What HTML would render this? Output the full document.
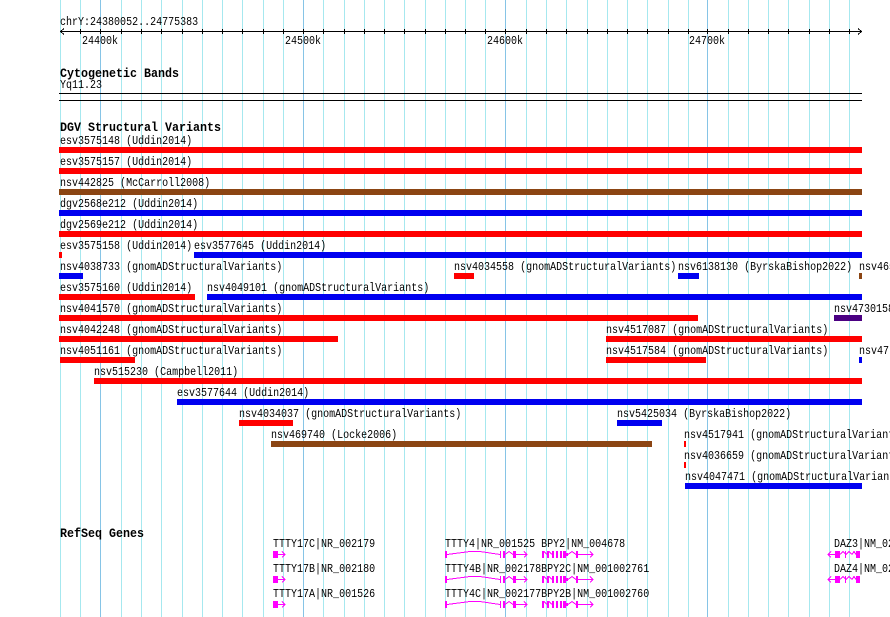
<!DOCTYPE html>
<html><head><meta charset="utf-8"><style>
html,body{margin:0;padding:0;background:#fff;width:890px;height:617px;overflow:hidden;position:relative}
.t{position:absolute;font-family:"Liberation Mono","DejaVu Sans Mono",monospace;font-size:12px;line-height:12px;color:#000;white-space:nowrap;transform:scaleX(0.834);transform-origin:0 0}
.h{font-weight:bold;font-size:13px;line-height:13px;transform:scaleX(0.897)}
.v{margin-top:-1px}
.b{position:absolute;height:6px}
.r{background:#ff0000}.u{background:#0000f0}.n{background:#8b4513}.p{background:#4b0082}
svg{position:absolute;left:0;top:0}
</style></head><body>
<svg width="890" height="617" shape-rendering="crispEdges">
<g stroke="#a6e8ef" stroke-width="1">
<line x1="60.5" y1="0" x2="60.5" y2="617"/><line x1="80.5" y1="0" x2="80.5" y2="617"/><line x1="121.5" y1="0" x2="121.5" y2="617"/><line x1="141.5" y1="0" x2="141.5" y2="617"/><line x1="161.5" y1="0" x2="161.5" y2="617"/><line x1="182.5" y1="0" x2="182.5" y2="617"/><line x1="202.5" y1="0" x2="202.5" y2="617"/><line x1="222.5" y1="0" x2="222.5" y2="617"/><line x1="242.5" y1="0" x2="242.5" y2="617"/><line x1="263.5" y1="0" x2="263.5" y2="617"/><line x1="283.5" y1="0" x2="283.5" y2="617"/><line x1="323.5" y1="0" x2="323.5" y2="617"/><line x1="344.5" y1="0" x2="344.5" y2="617"/><line x1="364.5" y1="0" x2="364.5" y2="617"/><line x1="384.5" y1="0" x2="384.5" y2="617"/><line x1="404.5" y1="0" x2="404.5" y2="617"/><line x1="425.5" y1="0" x2="425.5" y2="617"/><line x1="445.5" y1="0" x2="445.5" y2="617"/><line x1="465.5" y1="0" x2="465.5" y2="617"/><line x1="485.5" y1="0" x2="485.5" y2="617"/><line x1="526.5" y1="0" x2="526.5" y2="617"/><line x1="546.5" y1="0" x2="546.5" y2="617"/><line x1="566.5" y1="0" x2="566.5" y2="617"/><line x1="587.5" y1="0" x2="587.5" y2="617"/><line x1="607.5" y1="0" x2="607.5" y2="617"/><line x1="627.5" y1="0" x2="627.5" y2="617"/><line x1="647.5" y1="0" x2="647.5" y2="617"/><line x1="668.5" y1="0" x2="668.5" y2="617"/><line x1="688.5" y1="0" x2="688.5" y2="617"/><line x1="728.5" y1="0" x2="728.5" y2="617"/><line x1="748.5" y1="0" x2="748.5" y2="617"/><line x1="768.5" y1="0" x2="768.5" y2="617"/><line x1="788.5" y1="0" x2="788.5" y2="617"/><line x1="809.5" y1="0" x2="809.5" y2="617"/><line x1="829.5" y1="0" x2="829.5" y2="617"/><line x1="849.5" y1="0" x2="849.5" y2="617"/>
</g>
<g stroke="#86c4e6" stroke-width="1">
<line x1="100.5" y1="0" x2="100.5" y2="617"/><line x1="303.5" y1="0" x2="303.5" y2="617"/><line x1="505.5" y1="0" x2="505.5" y2="617"/><line x1="707.5" y1="0" x2="707.5" y2="617"/>
</g>
<g stroke="#000" stroke-width="1">
<line x1="60" y1="31.5" x2="862" y2="31.5"/>
<polyline fill="none" points="64,28.5 60.5,31.5 64,34.5"/>
<polyline fill="none" points="858,28.5 861.5,31.5 858,34.5"/>
<line x1="80.5" y1="29" x2="80.5" y2="34"/><line x1="100.5" y1="29" x2="100.5" y2="34"/><line x1="121.5" y1="29" x2="121.5" y2="34"/><line x1="141.5" y1="29" x2="141.5" y2="34"/><line x1="161.5" y1="29" x2="161.5" y2="34"/><line x1="182.5" y1="29" x2="182.5" y2="34"/><line x1="202.5" y1="29" x2="202.5" y2="34"/><line x1="222.5" y1="29" x2="222.5" y2="34"/><line x1="242.5" y1="29" x2="242.5" y2="34"/><line x1="263.5" y1="29" x2="263.5" y2="34"/><line x1="283.5" y1="29" x2="283.5" y2="34"/><line x1="303.5" y1="29" x2="303.5" y2="34"/><line x1="323.5" y1="29" x2="323.5" y2="34"/><line x1="344.5" y1="29" x2="344.5" y2="34"/><line x1="364.5" y1="29" x2="364.5" y2="34"/><line x1="384.5" y1="29" x2="384.5" y2="34"/><line x1="404.5" y1="29" x2="404.5" y2="34"/><line x1="425.5" y1="29" x2="425.5" y2="34"/><line x1="445.5" y1="29" x2="445.5" y2="34"/><line x1="465.5" y1="29" x2="465.5" y2="34"/><line x1="485.5" y1="29" x2="485.5" y2="34"/><line x1="505.5" y1="29" x2="505.5" y2="34"/><line x1="526.5" y1="29" x2="526.5" y2="34"/><line x1="546.5" y1="29" x2="546.5" y2="34"/><line x1="566.5" y1="29" x2="566.5" y2="34"/><line x1="587.5" y1="29" x2="587.5" y2="34"/><line x1="607.5" y1="29" x2="607.5" y2="34"/><line x1="627.5" y1="29" x2="627.5" y2="34"/><line x1="647.5" y1="29" x2="647.5" y2="34"/><line x1="668.5" y1="29" x2="668.5" y2="34"/><line x1="688.5" y1="29" x2="688.5" y2="34"/><line x1="707.5" y1="29" x2="707.5" y2="34"/><line x1="728.5" y1="29" x2="728.5" y2="34"/><line x1="748.5" y1="29" x2="748.5" y2="34"/><line x1="768.5" y1="29" x2="768.5" y2="34"/><line x1="788.5" y1="29" x2="788.5" y2="34"/><line x1="809.5" y1="29" x2="809.5" y2="34"/><line x1="829.5" y1="29" x2="829.5" y2="34"/><line x1="849.5" y1="29" x2="849.5" y2="34"/>
<line x1="59" y1="93.5" x2="862" y2="93.5"/>
<line x1="59" y1="100.5" x2="862" y2="100.5"/>
</g>
<g fill="#ff00ff" stroke="#ff00ff" stroke-width="1">
<g id="g17"><rect x="273" y="551" width="5" height="7" stroke="none"/><line x1="278" y1="554.5" x2="285" y2="554.5"/><polyline fill="none" points="282,551.5 285,554.5 282,557.5"/></g>
<use href="#g17" transform="translate(0,25)"/>
<use href="#g17" transform="translate(0,50)"/>
<g id="t4">
<rect x="445" y="551" width="2" height="7" stroke="none"/>
<path fill="none" d="M447 554.5 L470 551.5 L480 551.5 L500 554.5"/>
<rect x="500" y="551" width="1" height="7" stroke="none"/><rect x="503" y="551" width="2" height="7" stroke="none"/>
<polyline fill="none" points="505,554.5 509,551.5 513,554.5"/>
<rect x="513" y="551" width="3" height="7" stroke="none"/>
<line x1="516" y1="554.5" x2="527" y2="554.5"/><polyline fill="none" points="524,551.5 527,554.5 524,557.5"/>
<rect x="542" y="551" width="2" height="7" stroke="none"/>
<polyline fill="none" points="544,551.5 547,554.5"/>
<rect x="547" y="551" width="2" height="7" stroke="none"/>
<polyline fill="none" points="549,551.5 552,554.5"/>
<rect x="552" y="551" width="2" height="7" stroke="none"/>
<rect x="556" y="551" width="2" height="7" stroke="none"/>
<rect x="560" y="551" width="2" height="7" stroke="none"/><rect x="563" y="551" width="3" height="7" stroke="none"/>
<rect x="566" y="553" width="2" height="3" stroke="none"/>
<polyline fill="none" points="568,554.5 572,551.5 576,554.5"/>
<rect x="576" y="551" width="2" height="7" stroke="none"/>
<line x1="578" y1="554.5" x2="593" y2="554.5"/><polyline fill="none" points="590,551.5 593,554.5 590,557.5"/>
</g>
<use href="#t4" transform="translate(0,25)"/>
<use href="#t4" transform="translate(0,50)"/>
<g id="dz">
<line x1="828" y1="554.5" x2="835" y2="554.5"/><polyline fill="none" points="831,551.5 828,554.5 831,557.5"/>
<rect x="835" y="551" width="5" height="7" stroke="none"/>
<polyline fill="none" points="840,554.5 843,551.5 846,554.5 849,551.5 852,554.5"/>
<rect x="845" y="551" width="1" height="7" stroke="none"/>
<rect x="856" y="551" width="4" height="7" stroke="none"/>
<polyline fill="none" points="852,554.5 854,551.5 856,554.5"/>
</g>
<use href="#dz" transform="translate(0,25)"/>
</g>
</svg>

<div class="t" style="left:60px;top:16px">chrY:24380052..24775383</div>
<div class="t" style="left:82px;top:35px">24400k</div>
<div class="t" style="left:285px;top:35px">24500k</div>
<div class="t" style="left:487px;top:35px">24600k</div>
<div class="t" style="left:689px;top:35px">24700k</div>

<div class="t h" style="left:60px;top:67px">Cytogenetic Bands</div>
<div class="t" style="left:60px;top:79px">Yq11.23</div>

<div class="t h" style="left:60px;top:121px">DGV Structural Variants</div>

<div class="t v" style="left:60px;top:136px">esv3575148 (Uddin2014)</div>
<div class="b r" style="left:59px;top:147px;width:803px"></div>
<div class="t v" style="left:60px;top:157px">esv3575157 (Uddin2014)</div>
<div class="b r" style="left:59px;top:168px;width:803px"></div>
<div class="t v" style="left:60px;top:178px">nsv442825 (McCarroll2008)</div>
<div class="b n" style="left:59px;top:189px;width:803px"></div>
<div class="t v" style="left:60px;top:199px">dgv2568e212 (Uddin2014)</div>
<div class="b u" style="left:59px;top:210px;width:803px"></div>
<div class="t v" style="left:60px;top:220px">dgv2569e212 (Uddin2014)</div>
<div class="b r" style="left:59px;top:231px;width:803px"></div>

<div class="t v" style="left:60px;top:241px">esv3575158 (Uddin2014)</div>
<div class="b r" style="left:59px;top:252px;width:3px"></div>
<div class="t v" style="left:194px;top:241px">esv3577645 (Uddin2014)</div>
<div class="b u" style="left:194px;top:252px;width:668px"></div>

<div class="t v" style="left:60px;top:262px">nsv4038733 (gnomADStructuralVariants)</div>
<div class="b u" style="left:59px;top:273px;width:24px"></div>
<div class="t v" style="left:454px;top:262px">nsv4034558 (gnomADStructuralVariants)</div>
<div class="b r" style="left:454px;top:273px;width:20px"></div>
<div class="t v" style="left:678px;top:262px">nsv6138130 (ByrskaBishop2022)</div>
<div class="b u" style="left:678px;top:273px;width:21px"></div>
<div class="t v" style="left:859px;top:262px">nsv465</div>
<div class="b n" style="left:859px;top:273px;width:3px"></div>

<div class="t v" style="left:60px;top:283px">esv3575160 (Uddin2014)</div>
<div class="b r" style="left:59px;top:294px;width:136px"></div>
<div class="t v" style="left:207px;top:283px">nsv4049101 (gnomADStructuralVariants)</div>
<div class="b u" style="left:207px;top:294px;width:655px"></div>

<div class="t v" style="left:60px;top:304px">nsv4041570 (gnomADStructuralVariants)</div>
<div class="b r" style="left:59px;top:315px;width:639px"></div>
<div class="t v" style="left:834px;top:304px">nsv4730158</div>
<div class="b p" style="left:834px;top:315px;width:28px"></div>

<div class="t v" style="left:60px;top:325px">nsv4042248 (gnomADStructuralVariants)</div>
<div class="b r" style="left:59px;top:336px;width:279px"></div>
<div class="t v" style="left:606px;top:325px">nsv4517087 (gnomADStructuralVariants)</div>
<div class="b r" style="left:606px;top:336px;width:256px"></div>

<div class="t v" style="left:60px;top:346px">nsv4051161 (gnomADStructuralVariants)</div>
<div class="b r" style="left:60px;top:357px;width:75px"></div>
<div class="t v" style="left:606px;top:346px">nsv4517584 (gnomADStructuralVariants)</div>
<div class="b r" style="left:606px;top:357px;width:100px"></div>
<div class="t v" style="left:859px;top:346px">nsv47</div>
<div class="b u" style="left:859px;top:357px;width:3px"></div>

<div class="t v" style="left:94px;top:367px">nsv515230 (Campbell2011)</div>
<div class="b r" style="left:94px;top:378px;width:768px"></div>

<div class="t v" style="left:177px;top:388px">esv3577644 (Uddin2014)</div>
<div class="b u" style="left:177px;top:399px;width:685px"></div>

<div class="t v" style="left:239px;top:409px">nsv4034037 (gnomADStructuralVariants)</div>
<div class="b r" style="left:239px;top:420px;width:54px"></div>
<div class="t v" style="left:617px;top:409px">nsv5425034 (ByrskaBishop2022)</div>
<div class="b u" style="left:617px;top:420px;width:45px"></div>

<div class="t v" style="left:271px;top:430px">nsv469740 (Locke2006)</div>
<div class="b n" style="left:271px;top:441px;width:381px"></div>
<div class="t v" style="left:684px;top:430px">nsv4517941 (gnomADStructuralVariants)</div>
<div class="b r" style="left:684px;top:441px;width:2px"></div>

<div class="t v" style="left:684px;top:451px">nsv4036659 (gnomADStructuralVariants)</div>
<div class="b r" style="left:684px;top:462px;width:2px"></div>

<div class="t v" style="left:685px;top:472px">nsv4047471 (gnomADStructuralVariants)</div>
<div class="b u" style="left:685px;top:483px;width:177px"></div>

<div class="t h" style="left:60px;top:527px">RefSeq Genes</div>
<div class="t" style="left:273px;top:538px">TTTY17C|NR_002179</div>
<div class="t" style="left:273px;top:563px">TTTY17B|NR_002180</div>
<div class="t" style="left:273px;top:588px">TTTY17A|NR_001526</div>
<div class="t" style="left:445px;top:538px">TTTY4|NR_001525 BPY2|NM_004678</div>
<div class="t" style="left:445px;top:563px">TTTY4B|NR_002178BPY2C|NM_001002761</div>
<div class="t" style="left:445px;top:588px">TTTY4C|NR_002177BPY2B|NM_001002760</div>
<div class="t" style="left:834px;top:538px">DAZ3|NM_02</div>
<div class="t" style="left:834px;top:563px">DAZ4|NM_02</div>
</body></html>
